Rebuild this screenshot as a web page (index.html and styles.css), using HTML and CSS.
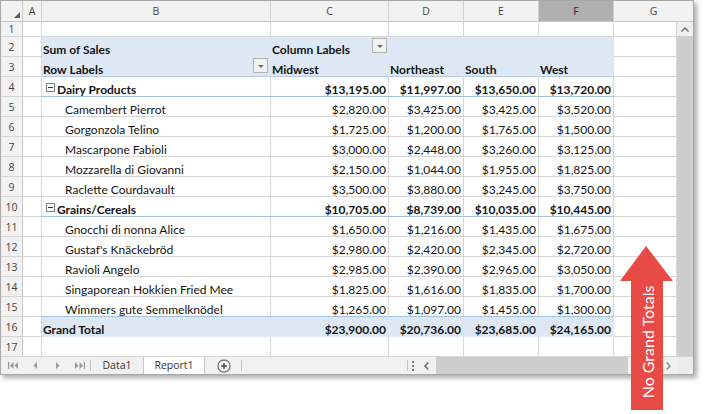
FILE: index.html
```html
<!DOCTYPE html>
<html>
<head>
<meta charset="utf-8">
<link rel="stylesheet" href="styles.css">
</head>
<body>
<div class="window">
  <div class="colhead">
    <div class="ch corner"><span class="tri"></span></div>
    <div class="ch">A</div>
    <div class="ch">B</div>
    <div class="ch">C</div>
    <div class="ch">D</div>
    <div class="ch">E</div>
    <div class="ch sel">F</div>
    <div class="ch last">G</div>
  </div>
  <div class="body">
    <div class="rows">
      <div class="row r15"><div class="rh">1</div><div class="c"></div><div class="c"></div><div class="c"></div><div class="c"></div><div class="c"></div><div class="c"></div><div class="c"></div></div>
      <div class="row"><div class="rh">2</div><div class="c"></div><div class="c b pv">Sum of Sales</div><div class="c b pv">Column Labels<span class="dd"></span></div><div class="c pv"></div><div class="c pv"></div><div class="c pv"></div><div class="c"></div></div>
      <div class="row"><div class="rh">3</div><div class="c"></div><div class="c b pv ph">Row Labels<span class="dd dd2"></span></div><div class="c b pv ph">Midwest</div><div class="c b pv ph">Northeast</div><div class="c b pv ph">South</div><div class="c b pv ph">West</div><div class="c"></div></div>
      <div class="row"><div class="rh">4</div><div class="c"></div><div class="c b cat catl"><span class="box"></span>Dairy Products</div><div class="c b cat num">$13,195.00</div><div class="c b cat num">$11,997.00</div><div class="c b cat num">$13,650.00</div><div class="c b cat num">$13,720.00</div><div class="c"></div></div>
      <div class="row"><div class="rh">5</div><div class="c"></div><div class="c item">Camembert Pierrot</div><div class="c num">$2,820.00</div><div class="c num">$3,425.00</div><div class="c num">$3,425.00</div><div class="c num">$3,520.00</div><div class="c"></div></div>
      <div class="row"><div class="rh">6</div><div class="c"></div><div class="c item">Gorgonzola Telino</div><div class="c num">$1,725.00</div><div class="c num">$1,200.00</div><div class="c num">$1,765.00</div><div class="c num">$1,500.00</div><div class="c"></div></div>
      <div class="row"><div class="rh">7</div><div class="c"></div><div class="c item">Mascarpone Fabioli</div><div class="c num">$3,000.00</div><div class="c num">$2,448.00</div><div class="c num">$3,260.00</div><div class="c num">$3,125.00</div><div class="c"></div></div>
      <div class="row"><div class="rh">8</div><div class="c"></div><div class="c item">Mozzarella di Giovanni</div><div class="c num">$2,150.00</div><div class="c num">$1,044.00</div><div class="c num">$1,955.00</div><div class="c num">$1,825.00</div><div class="c"></div></div>
      <div class="row"><div class="rh">9</div><div class="c"></div><div class="c item">Raclette Courdavault</div><div class="c num">$3,500.00</div><div class="c num">$3,880.00</div><div class="c num">$3,245.00</div><div class="c num">$3,750.00</div><div class="c"></div></div>
      <div class="row"><div class="rh">10</div><div class="c"></div><div class="c b cat catl"><span class="box"></span>Grains/Cereals</div><div class="c b cat num">$10,705.00</div><div class="c b cat num">$8,739.00</div><div class="c b cat num">$10,035.00</div><div class="c b cat num">$10,445.00</div><div class="c"></div></div>
      <div class="row"><div class="rh">11</div><div class="c"></div><div class="c item">Gnocchi di nonna Alice</div><div class="c num">$1,650.00</div><div class="c num">$1,216.00</div><div class="c num">$1,435.00</div><div class="c num">$1,675.00</div><div class="c"></div></div>
      <div class="row"><div class="rh">12</div><div class="c"></div><div class="c item">Gustaf's Knäckebröd</div><div class="c num">$2,980.00</div><div class="c num">$2,420.00</div><div class="c num">$2,345.00</div><div class="c num">$2,720.00</div><div class="c"></div></div>
      <div class="row"><div class="rh">13</div><div class="c"></div><div class="c item">Ravioli Angelo</div><div class="c num">$2,985.00</div><div class="c num">$2,390.00</div><div class="c num">$2,965.00</div><div class="c num">$3,050.00</div><div class="c"></div></div>
      <div class="row"><div class="rh">14</div><div class="c"></div><div class="c item">Singaporean Hokkien Fried Mee</div><div class="c num">$1,825.00</div><div class="c num">$1,616.00</div><div class="c num">$1,835.00</div><div class="c num">$1,700.00</div><div class="c"></div></div>
      <div class="row"><div class="rh">15</div><div class="c"></div><div class="c item cat">Wimmers gute Semmelknödel</div><div class="c num cat">$1,265.00</div><div class="c num cat">$1,097.00</div><div class="c num cat">$1,455.00</div><div class="c num cat">$1,300.00</div><div class="c"></div></div>
      <div class="row"><div class="rh">16</div><div class="c"></div><div class="c b pv">Grand Total</div><div class="c b pv num">$23,900.00</div><div class="c b pv num">$20,736.00</div><div class="c b pv num">$23,685.00</div><div class="c b pv num">$24,165.00</div><div class="c"></div></div>
      <div class="row"><div class="rh">17</div><div class="c"></div><div class="c"></div><div class="c"></div><div class="c"></div><div class="c"></div><div class="c"></div><div class="c"></div></div>
    </div>
    <div class="vscroll">
      <div class="vs-up"><svg width="8" height="5" viewBox="0 0 8 5"><path d="M0.5 4.5 L4 1 L7.5 4.5" fill="none" stroke="#6e6e6e" stroke-width="1.4"/></svg></div>
      <div class="vs-thumb"></div>
    </div>
  </div>
  <div class="tabbar">
    <div class="nav">
      <span class="navbtn"><svg width="11" height="7" viewBox="0 0 11 7"><rect x="0" y="0" width="1.2" height="7" fill="#9a9a9a"/><path d="M5.5 0 L2 3.5 L5.5 7Z M10 0 L6.5 3.5 L10 7Z" fill="#9a9a9a"/></svg></span>
      <span class="navbtn"><svg width="5" height="7" viewBox="0 0 5 7"><path d="M4 0 L0.5 3.5 L4 7Z" fill="#9a9a9a"/></svg></span>
      <span class="navbtn"><svg width="5" height="7" viewBox="0 0 5 7"><path d="M1 0 L4.5 3.5 L1 7Z" fill="#9a9a9a"/></svg></span>
      <span class="navbtn"><svg width="11" height="7" viewBox="0 0 11 7"><path d="M1 0 L4.5 3.5 L1 7Z M5.5 0 L9 3.5 L5.5 7Z" fill="#9a9a9a"/><rect x="9.8" y="0" width="1.2" height="7" fill="#9a9a9a"/></svg></span>
    </div>
    <span class="sep"></span>
    <div class="tab">Data1</div>
    <div class="tab active">Report1</div>
    <div class="addtab"><svg width="14" height="14" viewBox="0 0 14 14"><circle cx="7" cy="7" r="6" fill="#fff" stroke="#777" stroke-width="1.3"/><path d="M7 4 V10 M4 7 H10" stroke="#555" stroke-width="1.6"/></svg></div>
    <span class="sep"></span>
    <div class="tabfill"></div>
    <span class="sep"></span>
    <div class="hsplit"><i></i><i></i><i></i></div>
    <div class="hbtn hl"><svg width="5" height="8" viewBox="0 0 5 8"><path d="M4.3 0.5 L1 4 L4.3 7.5" fill="none" stroke="#6e6e6e" stroke-width="1.5"/></svg></div>
    <div class="hthumb"></div>
    <div class="htrack"></div>
    <div class="hbtn hr"><svg width="5" height="8" viewBox="0 0 5 8"><path d="M0.7 0.5 L4 4 L0.7 7.5" fill="none" stroke="#8a8a8a" stroke-width="1.5"/></svg></div>
    <div class="corner-sq"></div>
  </div>
</div>
<svg class="arrow" width="706" height="414" viewBox="0 0 706 414">
  <path d="M646 246 L673 281 L663 281 L663 410 L631 410 L631 281 L620 281 Z" fill="#e84b46"/>
  <text class="arrow-text" transform="translate(653.5 342) rotate(-90)" text-anchor="middle">No Grand Totals</text>
</svg>
</body>
</html>
```
FILE: styles.css
```css
html, body {
  margin: 0;
  padding: 0;
  background: #ffffff;
}
body {
  position: relative;
  width: 706px;
  height: 414px;
  overflow: hidden;
}
.window {
  width: 692px;
  border: 1px solid #a8a8a8;
  background: #fff;
  box-shadow: 3px 3px 5px rgba(0, 0, 0, 0.33);
  display: flex;
  flex-direction: column;
  font-family: "Lato", "Liberation Sans", sans-serif;
  color: #141414;
}
.colhead {
  display: grid;
  grid-template-columns: 22px 19px 229px 118px 75px 75px 75px 79px;
  height: 21px;
}
.ch {
  box-sizing: border-box;
  background: #f2f2f2;
  border-right: 1px solid #d2d2d2;
  border-bottom: 1px solid #c8c8c8;
  font-family: "Open Sans", "Noto Sans", sans-serif;
  font-size: 10.5px;
  line-height: 20px;
  color: #444;
  text-align: center;
}
.ch.sel {
  background: #afafaf;
  color: #2a2a2a;
}
.ch.last {
  border-right: none;
}
.ch.corner {
  display: flex;
  justify-content: flex-end;
  align-items: flex-end;
  padding: 0 2px 3px 0;
  border-right-color: #c8c8c8;
}
.tri {
  width: 0;
  height: 0;
  border-left: 6px solid transparent;
  border-bottom: 6px solid #5a5a5a;
}
.body {
  display: flex;
}
.rows {
  width: 676px;
  display: flex;
  flex-direction: column;
}
.row {
  display: grid;
  grid-template-columns: 22px 19px 229px 118px 75px 75px 75px 63px;
  height: 20px;
}
.row.r15 {
  height: 15px;
}
.rh {
  box-sizing: border-box;
  background: #f2f2f2;
  border-right: 1px solid #c8c8c8;
  border-bottom: 1px solid #d4d4d4;
  font-family: "Open Sans", "Noto Sans", sans-serif;
  font-size: 10.5px;
  color: #444;
  display: flex;
  align-items: center;
  justify-content: center;
}
.c {
  box-sizing: border-box;
  border-right: 1px solid #d6d6d6;
  border-bottom: 1px solid #d6d6d6;
  display: flex;
  align-items: flex-end;
  padding: 0 1px;
  font-size: 12px;
  line-height: 12px;
  white-space: nowrap;
  overflow: hidden;
}
.c.b {
  font-weight: 700;
}
.c.num {
  justify-content: flex-end;
  padding-right: 2px;
}
.c.pv {
  background: #dde8f4;
  border-right-color: #dde8f4;
  border-bottom-color: #dde8f4;
}
.c.pv.ph {
  border-bottom-color: #b3cde9;
}
.c.cat {
  border-bottom-color: #9fc2e6;
}
.c.item {
  padding-left: 23px;
}
.c.catl {
  padding-left: 4px;
}
.box {
  box-sizing: border-box;
  width: 9px;
  height: 9px;
  border: 1px solid #808080;
  background: #fff;
  margin: 0 2px 4px 0;
  display: flex;
  align-items: center;
  justify-content: center;
  flex-shrink: 0;
}
.box::after {
  content: "";
  width: 5px;
  height: 1px;
  background: #333;
}
.dd {
  box-sizing: border-box;
  width: 15px;
  height: 15px;
  margin-left: auto;
  margin-top: 1px;
  align-self: flex-start;
  border: 1px solid #b2b2b2;
  background: #f2f2f2;
  display: flex;
  align-items: center;
  justify-content: center;
  flex-shrink: 0;
}
.dd.dd2 {
  margin-right: 1px;
}
.dd::after {
  content: "";
  width: 0;
  height: 0;
  border-left: 3px solid transparent;
  border-right: 3px solid transparent;
  border-top: 3px solid #707070;
  margin-top: 1px;
}
.vscroll {
  width: 16px;
  display: flex;
  flex-direction: column;
  box-sizing: border-box;
  border-bottom: 1px solid #d6d6d6;
}
.vs-up {
  height: 14px;
  background: #f0f0f0;
  display: flex;
  align-items: center;
  justify-content: center;
}
.vs-thumb {
  flex: 1;
  background: #cdcdcd;
}
.tabbar {
  height: 17px;
  display: flex;
  align-items: stretch;
  background: #f0f0f0;
  font-family: "Open Sans", "Noto Sans", sans-serif;
  font-size: 10.5px;
  color: #333;
}
.nav {
  width: 89px;
  display: flex;
  padding-left: 2px;
  box-sizing: border-box;
}
.navbtn {
  width: 22px;
  display: flex;
  align-items: center;
  justify-content: center;
}
.sep {
  width: 1px;
  height: 11px;
  align-self: center;
  background: #c4c4c4;
  flex-shrink: 0;
}
.tab {
  box-sizing: border-box;
  width: 53px;
  border-right: 1px solid #c6c6c6;
  line-height: 17px;
  text-align: center;
}
.tab.active {
  width: 61px;
  background: #fff;
}
.addtab {
  width: 36px;
  display: flex;
  align-items: center;
  justify-content: center;
  padding-left: 1px;
  box-sizing: border-box;
}
.tabfill {
  flex: 1;
}
.hsplit {
  width: 9px;
  display: flex;
  flex-direction: column;
  align-items: center;
  justify-content: center;
  gap: 2px;
}
.hsplit i {
  width: 2px;
  height: 2px;
  background: #777;
}
.hbtn {
  display: flex;
  align-items: center;
  justify-content: center;
}
.hbtn.hl {
  width: 19px;
}
.hbtn.hr {
  width: 17px;
}
.hthumb {
  width: 192px;
  background: #cdcdcd;
}
.htrack {
  width: 32px;
}
.corner-sq {
  width: 16px;
  background: #ececec;
}
.arrow {
  position: absolute;
  left: 0;
  top: 0;
  pointer-events: none;
}
.arrow-text {
  font-family: "Lato", "Open Sans", sans-serif;
  font-size: 16px;
  fill: #ffffff;
}
```
